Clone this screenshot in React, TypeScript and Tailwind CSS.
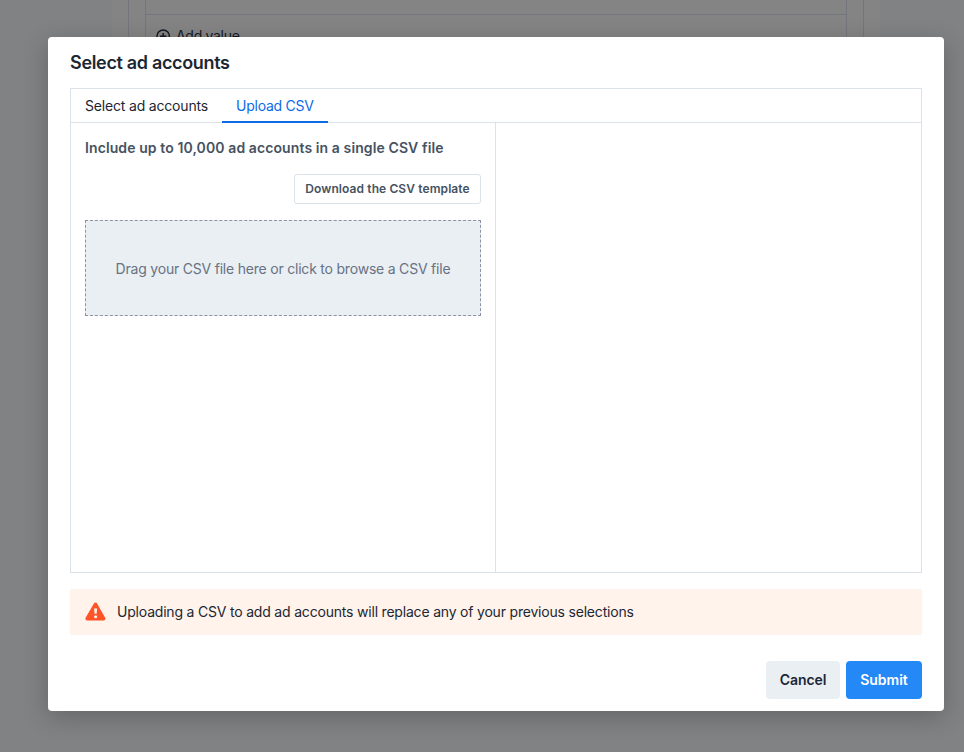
import React from "react";

function AddIcon() {
  return (
    <svg className="h-[15px] w-[15px] shrink-0" viewBox="0 0 15 15" fill="none" stroke="#141a22" strokeWidth="1.5">
      <circle cx="7.2" cy="7.2" r="6.2" />
      <path d="M7.2 3.9v6.6M3.9 7.2h6.6" />
    </svg>
  );
}

function WarningIcon() {
  return (
    <svg className="h-5 w-[22px] shrink-0" viewBox="0 0 22 20">
      <path
        d="M11.5 2.3 L19.6 16.7 H3.2 Z"
        fill="#ff5427"
        stroke="#ff5427"
        strokeWidth="3.6"
        strokeLinejoin="round"
      />
      <path d="M10.1 6.4h3l-.4 5.4h-2.2z" fill="#fff3eb" />
      <circle cx="11.6" cy="14.8" r="1.55" fill="#fff3eb" />
    </svg>
  );
}

function Backdrop() {
  return (
    <div className="flex h-full justify-center bg-[#818283]">
      <div className="ml-7 h-[600px] w-[768px] bg-[#848484] px-4">
        <div className="h-full border-x border-[#74767d] px-4">
          <div className="h-full border-x border-[#74767d]">
            <div className="h-[15px] border-b border-[#74767d]" />
            <div className="flex items-center gap-[5px] pl-[10px] pt-[11px] text-sm leading-5 tracking-[-0.3px] text-[#141a22]">
              <AddIcon />
              <span>Add value</span>
            </div>
          </div>
        </div>
      </div>
    </div>
  );
}

export default function App() {
  return (
    <div className="relative h-[752px] w-[964px] overflow-hidden font-['Inter',sans-serif] text-sm text-[#1c2b33]">
      <Backdrop />
      <div
        role="dialog"
        aria-label="Select ad accounts"
        className="absolute left-12 top-[37px] flex h-[674px] w-[896px] flex-col rounded-[4px] bg-white px-[22px] pb-3 shadow-[0_6px_24px_rgba(0,0,0,0.22)]"
      >
        <h2 className="h-[51px] pt-[14px] text-lg font-semibold leading-6 tracking-[-0.33px] text-[#1c2733]">
          Select ad accounts
        </h2>

        <div className="flex h-[485px] flex-col border border-[#dbe2ea]">
          <div className="flex h-[34px] shrink-0 border-b border-[#dbe2ea] tracking-[-0.18px]" role="tablist">
            <button className="h-[34px] w-[151px] whitespace-nowrap pl-[14px] text-left leading-5 text-[#1c2733]">
              Select ad accounts
            </button>
            <button className="h-[34px] w-[106px] whitespace-nowrap border-b-2 border-[#0d6be8] pl-[14px] pt-[2px] text-left leading-5 tracking-[-0.25px] text-[#0d6be8]">
              Upload CSV
            </button>
          </div>
          <div className="flex grow">
            <section className="flex w-[425px] flex-col border-r border-[#dbe2ea] px-[14px] pt-[15px]">
              <h3 className="whitespace-nowrap font-semibold leading-5 tracking-[0.1px] text-[#465262]">
                Include up to 10,000 ad accounts in a single CSV file
              </h3>
              <button className="mt-4 h-[30px] w-[187px] self-end whitespace-nowrap rounded-[3px] border border-[#dbe2ea] text-xs font-semibold tracking-[0.1px] text-[#465262]">
                Download the CSV template
              </button>
              <div className="mt-4 flex h-24 items-center justify-center border border-dashed border-[#8a94a6] bg-[#eaeff3] pt-[2px] tracking-[-0.21px] text-[#677283]">
                Drag your CSV file here or click to browse a CSV file
              </div>
            </section>
            <section className="grow" />
          </div>
        </div>

        <div className="mt-4 flex h-[46px] shrink-0 items-center gap-[11px] bg-[#fff3eb] pl-[14px] tracking-[-0.195px] text-[#1c2733]">
          <WarningIcon />
          <span>Uploading a CSV to add ad accounts will replace any of your previous selections</span>
        </div>

        <div className="mt-auto flex justify-end gap-[6px]">
          <button className="h-[38px] w-[74px] rounded-[4px] bg-[#eaeff3] font-semibold tracking-[-0.05px] text-[#1c2733]">
            Cancel
          </button>
          <button className="h-[38px] w-[76px] rounded-[4px] bg-[#2488f7] font-semibold text-white">Submit</button>
        </div>
      </div>
    </div>
  );
}
